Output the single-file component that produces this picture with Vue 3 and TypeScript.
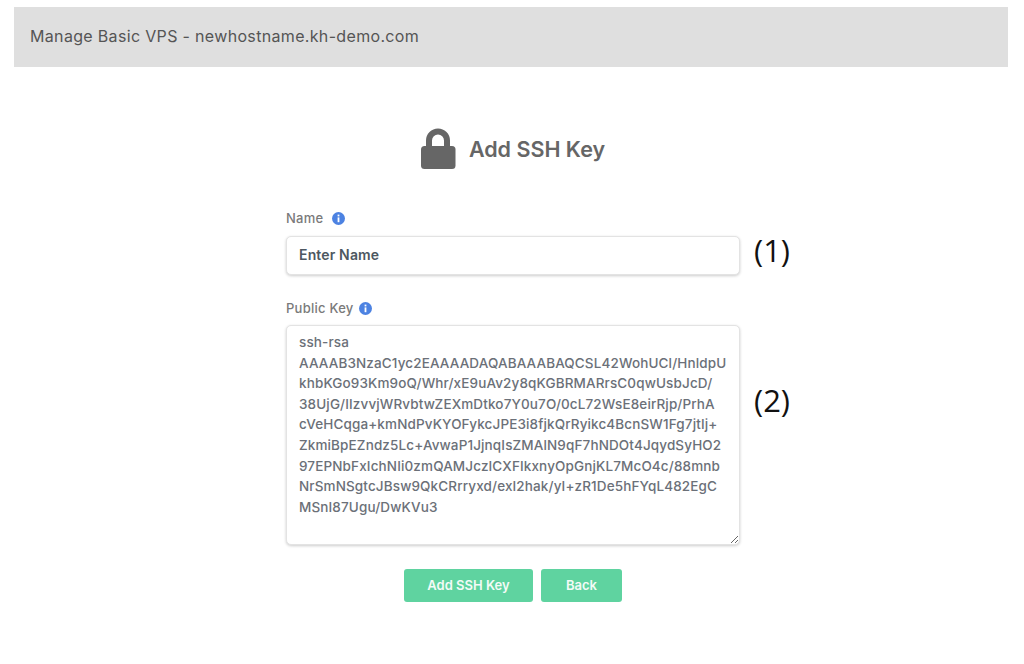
<script setup lang="ts">
const publicKey: string = [
  'ssh-rsa',
  'AAAAB3NzaC1yc2EAAAADAQABAAABAQCSL42WohUCl/HnldpU',
  'khbKGo93Km9oQ/Whr/xE9uAv2y8qKGBRMARrsC0qwUsbJcD/',
  '38UjG/IIzvvjWRvbtwZEXmDtko7Y0u7O/0cL72WsE8eirRjp/PrhA',
  'cVeHCqga+kmNdPvKYOFykcJPE3i8fjkQrRyikc4BcnSW1Fg7jtIj+',
  'ZkmiBpEZndz5Lc+AvwaP1JjnqIsZMAlN9qF7hNDOt4JqydSyHO2',
  '97EPNbFxIchNIi0zmQAMJczICXFIkxnyOpGnjKL7McO4c/88mnb',
  'NrSmNSgtcJBsw9QkCRrryxd/exI2hak/yI+zR1De5hFYqL482EgC',
  'MSnI87Ugu/DwKVu3',
].join('\n')
</script>

<template>
  <div class="page">
    <header class="bar">Manage Basic VPS - newhostname.kh-demo.com</header>

    <main class="form">
      <h1 class="title">
        <svg class="lock" viewBox="0 0 36 42" width="36" height="42" aria-hidden="true">
          <path d="M8 21V12.5a9 9 0 0 1 18 0V21" fill="none" stroke="#666" stroke-width="6" />
          <rect x="0" y="18" width="34.5" height="23" rx="3.5" fill="#666" />
        </svg>
        <span>Add SSH Key</span>
      </h1>

      <div class="field name-field">
        <label class="label">Name
          <svg class="info" viewBox="0 0 13 13" width="13" height="13" aria-hidden="true">
            <circle cx="6.5" cy="6.5" r="6.5" fill="#4c82e2" />
            <rect x="5.6" y="2.6" width="1.8" height="1.8" fill="#fff" />
            <rect x="5.6" y="5.4" width="1.8" height="4.8" fill="#fff" />
          </svg>
        </label>
        <div class="row">
          <input class="control input" type="text" placeholder="Enter Name" />
          <span class="note note-name">(1)</span>
        </div>
      </div>

      <div class="field key-field">
        <label class="label">Public Key
          <svg class="info" viewBox="0 0 13 13" width="13" height="13" aria-hidden="true">
            <circle cx="6.5" cy="6.5" r="6.5" fill="#4c82e2" />
            <rect x="5.6" y="2.6" width="1.8" height="1.8" fill="#fff" />
            <rect x="5.6" y="5.4" width="1.8" height="4.8" fill="#fff" />
          </svg>
        </label>
        <div class="row">
          <textarea class="control area" readonly wrap="off">{{ publicKey }}</textarea>
          <span class="note note-key">(2)</span>
        </div>
      </div>

      <div class="actions">
        <button class="btn add" type="button">Add SSH Key</button>
        <button class="btn back" type="button">Back</button>
      </div>
    </main>
  </div>
</template>

<style>
html, body { margin: 0; background: #fff; }
</style>

<style scoped>
.page {
  width: 1024px;
  height: 664px;
  box-sizing: border-box;
  padding: 7px 16px 0 14px;
  overflow: hidden;
  font-family: Inter, "Liberation Sans", sans-serif;
}
.bar {
  height: 60px;
  box-sizing: border-box;
  padding: 0 0 2px 16px;
  display: flex;
  align-items: center;
  background: #dfdfdf;
  color: #555;
  font-family: Inter, sans-serif;
  font-size: 16px;
  font-weight: 400;
  letter-spacing: 0.33px;
}
.form {
  width: 454px;
  margin-left: 272px;
}
.title {
  margin: 61px 0 0;
  height: 42px;
  display: flex;
  align-items: center;
  justify-content: center;
  gap: 12px;
  color: #666;
  font-size: 21.5px;
  font-weight: 600;
}
.lock { flex: none; }
.field { display: flex; flex-direction: column; }
.name-field { margin-top: 38px; }
.name-field .label { gap: 9px; }
.key-field { margin-top: 23px; }
.key-field .label { margin-bottom: 7px; gap: 5px; }
.label {
  height: 20px;
  display: flex;
  align-items: center;
  margin-bottom: 8px;
  color: #7a7a7a;
  font-size: 13px;
  font-weight: 500;
  letter-spacing: 0.25px;
}
.row {
  display: grid;
  grid-template-columns: 454px auto;
  column-gap: 14px;
  align-items: start;
  width: 560px;
}
.control {
  box-sizing: border-box;
  width: 454px;
  border: 1px solid #e3e3e3;
  border-radius: 5px;
  background: #fff;
  box-shadow: 0 1px 3px rgba(0, 0, 0, 0.2);
  font-family: Inter, "Liberation Sans", sans-serif;
  outline: none;
  margin: 0;
}
.input {
  height: 39px;
  padding: 0 12px 2px;
  font-size: 14px;
  font-weight: 600;
  letter-spacing: 0.15px;
}
.input::placeholder { color: #4d5761; opacity: 1; }
.area {
  display: block;
  height: 220px;
  padding: 6px 12px;
  color: #6b7078;
  font-size: 13.5px;
  font-weight: 500;
  letter-spacing: 0.13px;
  line-height: 20.6px;
  white-space: pre;
  overflow: hidden;
  resize: both;
}
.note {
  color: #111;
  font-family: "Open Sans", sans-serif;
  font-size: 31px;
  line-height: 31px;
}
.note-name { margin-top: -1px; }
.note-key { margin-top: 60px; }
.actions {
  display: flex;
  justify-content: center;
  gap: 8px;
  margin-top: 24px;
}
.btn {
  height: 33px;
  border: 0;
  border-radius: 3px;
  background: #5fd3a0;
  color: #f3fbf7;
  font-family: Inter, "Liberation Sans", sans-serif;
  font-size: 13px;
  font-weight: 600;
  padding: 0 0 2px;
}
.add { width: 129px; }
.back { width: 81px; }
</style>
